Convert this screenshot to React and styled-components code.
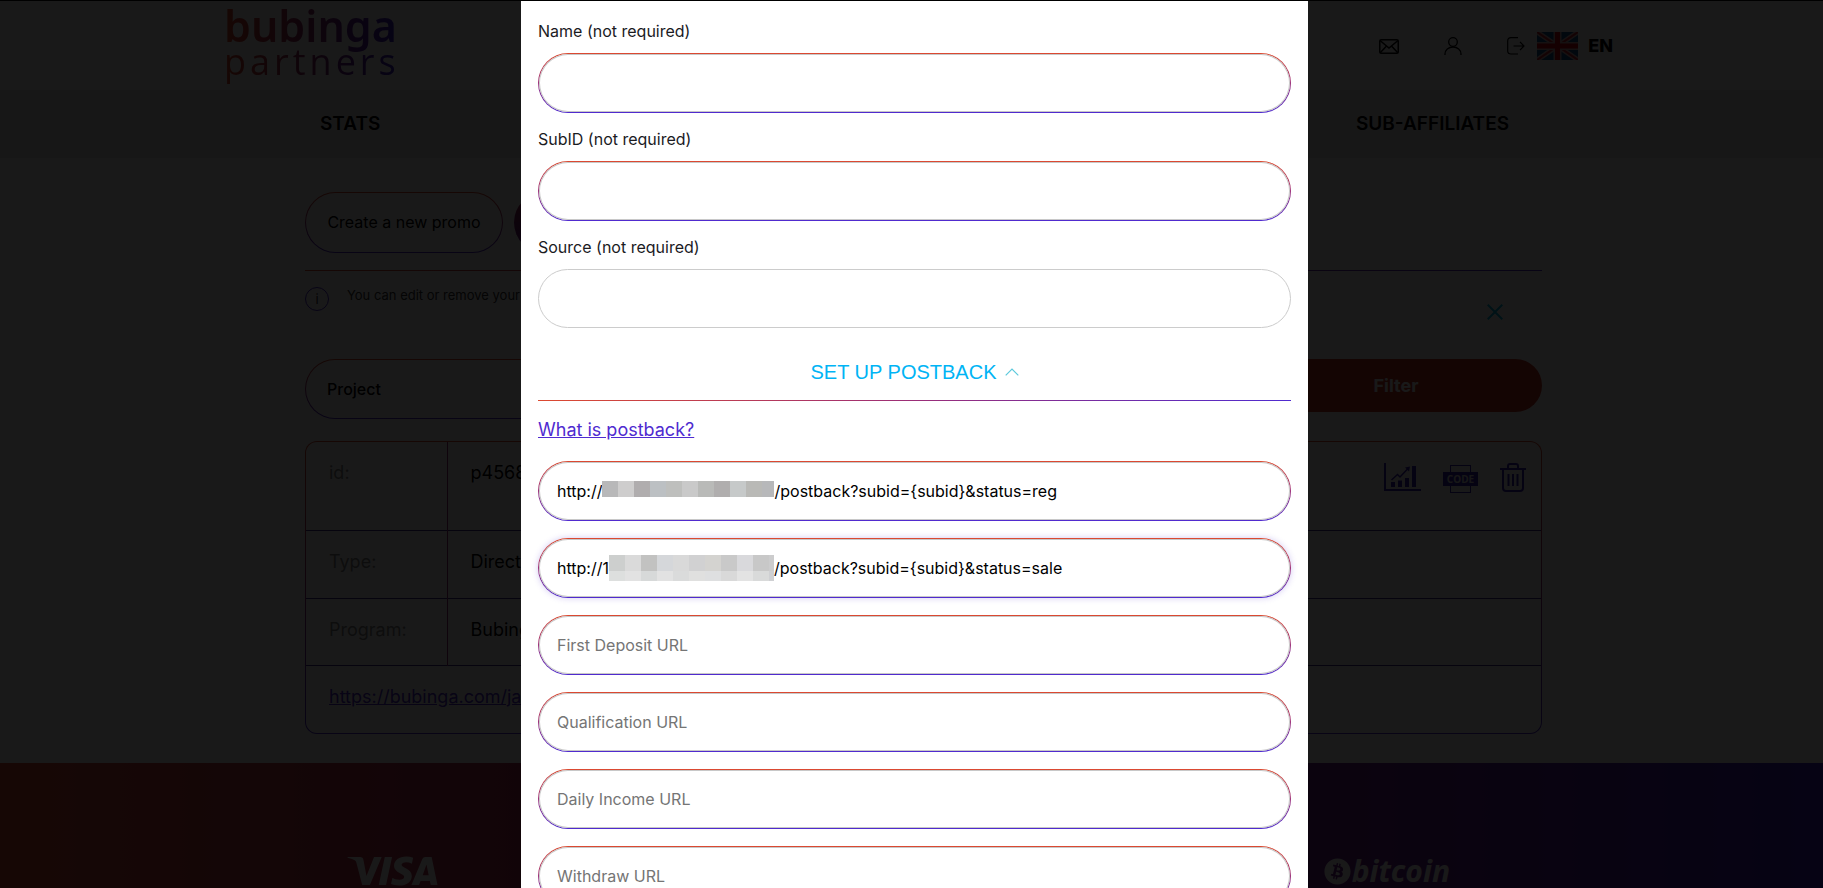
import React, { useState } from "react";
import styled, { createGlobalStyle } from "styled-components";
import { SiVisa } from "react-icons/si";
import { FaBitcoin } from "react-icons/fa";

const red = "#dc4a30";
const plum = "#9b2e78";
const violet = "#4f2bd0";

const GlobalStyle = createGlobalStyle`
  *, *::before, *::after { box-sizing: border-box; }
  body {
    margin: 0;
    overflow: hidden;
    background: #fff;
    color: #000;
    font: 400 16px/20px Inter, "Liberation Sans", sans-serif;
  }
  button, input, select { font: inherit; color: inherit; }
  button { cursor: pointer; }
`;

const Page = styled.div`
  display: flex;
  flex-direction: column;
  height: 100vh;
  overflow: hidden;
`;

const Header = styled.header`
  display: flex;
  justify-content: space-between;
  height: 90px;
  padding: 0 210px 0 224px;
`;

const Logo = styled.a`
  display: flex;
  flex-direction: column;
  color: transparent;
  background: linear-gradient(90deg, #e4472a, #8e2a6c 50%, #3a1fd0);
  background-clip: text;
  text-decoration: none;
`;

const LogoName = styled.span`
  font: 600 43px/52px "Noto Sans", sans-serif;
`;

const LogoTag = styled.span`
  font: 400 36px/20px "Open Sans", sans-serif;
  letter-spacing: 4px;
`;

const Tools = styled.div`
  display: flex;
  align-items: center;
  padding-top: 2px;
`;

const IconButton = styled.button`
  display: flex;
  padding: 0;
  border: 0;
  background: none;
  margin-right: ${(p) => p.$gap || 0}px;
`;

const Language = styled.button`
  display: flex;
  align-items: center;
  gap: 10px;
  padding: 0;
  border: 0;
  background: none;
  font-size: 18px;
  font-weight: 800;
`;

const Nav = styled.nav`
  display: flex;
  justify-content: space-between;
  align-items: center;
  height: 68px;
  padding: 0 314px 0 320px;
  background: #ececec;
`;

const NavLink = styled.a`
  color: #000;
  font-size: 19px;
  font-weight: 600;
  text-decoration: none;
`;

const Main = styled.main`
  width: calc(100% - 586px);
  margin-left: 305px;
  padding: 34px 0 29px;
`;

const outline = (fill = "#fff") => `
  border: 1px solid transparent;
  background:
    linear-gradient(${fill}, ${fill}) padding-box,
    linear-gradient(180deg, ${red}, ${plum} 50%, ${violet}) border-box;
`;

const PillRow = styled.div`
  display: flex;
  gap: 11px;
`;

const Pill = styled.button`
  height: 61px;
  min-width: 198px;
  padding: 0 21px 2px;
  border-radius: 31px;
  ${outline()}
`;

const PillFilled = styled(Pill)`
  border: 0;
  color: #fff;
  background: linear-gradient(180deg, #a3204a, #5a1c90);
`;

const Rule = styled.hr`
  height: 1px;
  margin: ${(p) => p.$top || 0}px 0 0;
  border: 0;
  background: linear-gradient(90deg, ${red}, ${plum} 50%, ${violet});
`;

const Notice = styled.div`
  display: flex;
  align-items: flex-start;
  height: 88px;
  padding: 16px 39px 0 0;
  color: #333;
  font-size: 13px;
`;

const Info = styled.span`
  width: 24px;
  height: 24px;
  margin-right: 18px;
  border: 1px solid ${violet};
  border-radius: 50%;
  text-align: center;
  line-height: 22px;
`;

const NoticeText = styled.p`
  flex: 1;
  margin: 0;
  line-height: 16px;
`;

const CloseNotice = styled(IconButton)`
  padding-top: 17px;
`;

const Filters = styled.form`
  display: flex;
  justify-content: space-between;
  align-items: flex-start;
`;

const Select = styled.select`
  width: 300px;
  height: 60px;
  padding: 0 21px;
  border-radius: 30px;
  appearance: none;
  font-weight: 500;
  ${outline()}
`;

const FilterButton = styled.button`
  width: 292px;
  height: 53px;
  border: 0;
  border-radius: 27px;
  color: #fff;
  background: #c93427;
  font-size: 18px;
  font-weight: 700;
`;

const Card = styled.section`
  margin-top: 22px;
  border-radius: 12px;
  ${outline()}
`;

const Table = styled.table`
  width: 100%;
  border-collapse: collapse;
  font-size: 18px;
  line-height: 24px;
`;

const Row = styled.tr`
  height: ${(p) => p.$height}px;
  & + & { border-top: 1px solid ${(p) => p.$line}; }
`;

const Term = styled.th`
  width: 141px;
  padding: 19px 23px;
  border-right: 1px solid ${plum};
  color: #888;
  font-weight: 400;
  text-align: left;
  vertical-align: top;
`;

const Value = styled.td`
  padding: 19px 15px 0 23px;
  vertical-align: top;
`;

const PromoLink = styled.a`
  color: ${violet};
`;

const ValueLine = styled.div`
  display: flex;
  justify-content: space-between;
`;

const Actions = styled.div`
  display: flex;
  align-items: flex-start;
  gap: 22px;
  padding-top: 2px;
  color: #3a22b8;
`;

const Footer = styled.footer`
  display: flex;
  flex: 1;
  justify-content: space-between;
  align-items: flex-end;
  padding: 0 373px 2px 347px;
  color: #fff;
  background: linear-gradient(90deg, #df4b38, #9e2664 40%, #8a1f78 62%, #3d1fc8);
`;

const Visa = styled(SiVisa)`
  width: 91px;
  height: 30px;
`;

const Bitcoin = styled.span`
  display: flex;
  align-items: center;
  gap: 1px;
  font: italic 700 30px/30px "Noto Sans", sans-serif;
`;

const Overlay = styled.div`
  position: fixed;
  inset: 0;
  display: flex;
  justify-content: center;
  align-items: flex-start;
  overflow: hidden;
  padding-left: 6px;
  border-top: 1px solid #000;
  background: rgba(0, 0, 0, 0.9);
`;

const Modal = styled.form`
  width: 787px;
  max-width: 100%;
  padding: 20px 17px;
  background: #fff;
`;

const Field = styled.div`
  display: flex;
  flex-direction: column;
  gap: 12px;
  margin-bottom: 16px;
`;

const Label = styled.label`
  color: #1b1b1f;
`;

const Box = styled.div`
  display: flex;
  align-items: center;
  height: 60px;
  padding: 0 18px;
  border-radius: 30px;
  ${outline()}
  box-shadow: inset 0 0 0 1px #c8c8c8${(p) => (p.$focused ? ", 0 0 6px rgba(79, 43, 208, 0.25)" : "")};
`;

const PlainBox = styled(Box)`
  height: 59px;
  border-color: #ccc;
  background: #fff;
  box-shadow: none;
`;

const Input = styled.input`
  flex: 1;
  min-width: 0;
  height: 40px;
  padding: 0;
  border: 0;
  outline: 0;
  background: transparent;
  &::placeholder { color: #757575; opacity: 1; }
`;

const Toggle = styled.button`
  display: flex;
  justify-content: center;
  align-items: center;
  gap: 8px;
  width: 100%;
  margin-top: 28px;
  padding: 0 0 12px;
  border: 0;
  background: none;
  color: #00b4f5;
  font: 400 20px/32px "Liberation Sans", sans-serif;
`;

const HelpLink = styled.a`
  display: inline-block;
  margin: 17px 0 19px;
  color: ${violet};
  font-size: 18px;
  line-height: 24px;
`;

const Urls = styled.div`
  display: flex;
  flex-direction: column;
  gap: 17px;
`;

const Mosaic = ({ width, height, rows }) => (
  <svg width={width} height={height} viewBox={`0 0 ${width} ${height}`} shapeRendering="crispEdges" aria-hidden="true">
    {rows.map((row) =>
      row.colors.map((c, i) => (
        <rect key={`${row.y}-${i}`} x={i * 16} y={row.y} width="16" height={row.height} fill={c} />
      ))
    )}
  </svg>
);

const regMosaic = [
  { y: 0, height: 16, colors: ["#b8b8b9", "#cecdcd", "#b0adae", "#bcc0c3", "#bebfbd", "#c9c9c9", "#b9bab8", "#b0aeae", "#c6c9c9", "#b9b9b6", "#b7b8ba"] },
];
const saleMosaic = [
  { y: 0, height: 16, colors: ["#cdcfce", "#dadada", "#c2c2c1", "#d5d7da", "#d9d9d9", "#d1d1d2", "#d4d3d0", "#c9c9c9", "#d9d9dc", "#c8c8c8", "#cccccd"] },
  { y: 16, height: 10, colors: ["#dddfde", "#e2e2e2", "#d7d9d9", "#e2e2e2", "#dadbdb", "#e0e0df", "#dedfe0", "#d9d9d9", "#e3e3e3", "#d9dada", "#cfd0d3"] },
];

const MailIcon = () => (
  <svg width="20" height="15" viewBox="0 0 20 15" fill="none" stroke="#000" strokeWidth="1.5">
    <rect x="0.75" y="0.75" width="18.5" height="13.5" rx="1.5" />
    <path d="M1 1.5l9 7.5 9-7.5M1 14l6.500-7M19 14l-6.500-7" />
  </svg>
);
const UserIcon = () => (
  <svg width="18" height="18" viewBox="0 0 18 18" fill="none" stroke="#000" strokeWidth="1.3">
    <circle cx="9" cy="5" r="4.300" />
    <path d="M1 18v-1c0-4 3.500-7 8-7s8 3 8 7v1" />
  </svg>
);
const LogoutIcon = () => (
  <svg width="18" height="18" viewBox="0 0 18 18" fill="none" stroke="#000" strokeWidth="1.2">
    <path d="M11 .7H4Q.7.7.7 4v10q0 3 3.300 3H11M6.500 9H17M13 4.800L17 9l-4 4.200" />
  </svg>
);
const FlagIcon = () => (
  <svg width="41" height="28" viewBox="0 0 41 28">
    <rect width="41" height="28" rx="1" fill="#10518f" />
    <path d="M0 0L41 28M41 0L0 28" stroke="#d8b0b0" strokeWidth="5" />
    <path d="M0 0L41 28M41 0L0 28" stroke="#c8202c" strokeWidth="2" />
    <path d="M20.500 0v28M0 14h41" stroke="#d8b0b0" strokeWidth="8" />
    <path d="M20.500 0v28M0 14h41" stroke="#d00012" strokeWidth="5" />
  </svg>
);
const CrossIcon = () => (
  <svg width="16" height="16" viewBox="0 0 16 16" stroke="#00b4e0" strokeWidth="2">
    <path d="M.7.7l14.600 14.600M15.300.7L.7 15.300" />
  </svg>
);
const ChartIcon = () => (
  <svg width="37" height="28" viewBox="0 0 37 28" fill="currentColor">
    <path d="M0 0h2v26h35v2H0zM7 19h4v5H7zM14 17.500h4V24h-4zM21 15h4v9h-4zM28 3h4v21h-4z" />
    <path d="M7.500 17l6-5.500 2.500 2.500 8-8.500" fill="none" stroke="currentColor" strokeWidth="1.500" />
    <path d="M21 4.500l5-1-1 5z" />
  </svg>
);
const CodeIcon = () => (
  <svg width="35" height="32" viewBox="0 -2 35 32">
    <rect x="7.500" y=".5" width="20" height="27" fill="none" stroke="currentColor" />
    <rect y="7" width="35" height="14" fill="currentColor" />
    <text x="17.500" y="18" textAnchor="middle" fill="#e8e8e8" fontFamily="Open Sans" fontSize="10" fontWeight="700">CODE</text>
  </svg>
);
const TrashIcon = () => (
  <svg width="26" height="29" viewBox="0 0 26 29" fill="none" stroke="currentColor" strokeWidth="2">
    <path d="M0 6h26M8 6V3q0-2 2-2h6q2 0 2 2v3M3 6v19q0 3 3 3h14q3 0 3-3V6M8.500 11v12M13 11v12M17.500 11v12" />
  </svg>
);
const ChevronUp = () => (
  <svg width="14" height="8" viewBox="0 0 14 8" fill="none" stroke="#5cc9dc" strokeWidth="1.2">
    <path d="M.7 7.300L7 1l6.300 6.300" />
  </svg>
);

const optionalFields = [
  { id: "name", label: "Name (not required)", Frame: Box },
  { id: "subid", label: "SubID (not required)", Frame: Box },
  { id: "source", label: "Source (not required)", Frame: PlainBox },
];

const emptyUrls = ["First Deposit URL", "Qualification URL", "Daily Income URL", "Withdraw URL"];

export default function App() {
  const [open, setOpen] = useState(true);
  return (
    <>
      <GlobalStyle />
      <Page>
        <Header>
          <Logo href="#">
            <LogoName>bubinga</LogoName>
            <LogoTag>partners</LogoTag>
          </Logo>
          <Tools>
            <IconButton $gap={45} aria-label="Messages"><MailIcon /></IconButton>
            <IconButton $gap={45} aria-label="Profile"><UserIcon /></IconButton>
            <IconButton $gap={12} aria-label="Log out"><LogoutIcon /></IconButton>
            <Language><FlagIcon />EN</Language>
          </Tools>
        </Header>
        <Nav>
          <NavLink href="#">STATS</NavLink>
          <NavLink href="#">SUB-AFFILIATES</NavLink>
        </Nav>
        <Main>
          <PillRow>
            <Pill>Create a new promo</Pill>
            <PillFilled aria-label="Promo list" />
          </PillRow>
          <Rule $top={17} />
          <Notice>
            <Info>i</Info>
            <NoticeText>You can edit or remove your promo</NoticeText>
            <CloseNotice aria-label="Close notice"><CrossIcon /></CloseNotice>
          </Notice>
          <Filters>
            <Select aria-label="Project"><option>Project</option></Select>
            <FilterButton type="button">Filter</FilterButton>
          </Filters>
          <Card>
            <Table>
              <tbody>
                <Row $height={88}>
                  <Term scope="row">id:</Term>
                  <Value>
                    <ValueLine>
                      p4568
                      <Actions><ChartIcon /><CodeIcon /><TrashIcon /></Actions>
                    </ValueLine>
                  </Value>
                </Row>
                <Row $height={68} $line="#5e2a52"><Term scope="row">Type:</Term><Value>Direct</Value></Row>
                <Row $height={67} $line="#4f2a62"><Term scope="row">Program:</Term><Value>Bubinga</Value></Row>
                <Row $height={68} $line="#3f2a90">
                  <Value colSpan={2}><PromoLink href="#">https://bubinga.com/ja</PromoLink></Value>
                </Row>
              </tbody>
            </Table>
          </Card>
        </Main>
        <Footer>
          <Visa viewBox="0 8 24 8" />
          <Bitcoin><FaBitcoin size={27} />bitcoin</Bitcoin>
        </Footer>
      </Page>
      <Overlay>
        <Modal>
          {optionalFields.map(({ id, label, Frame }) => (
            <Field key={id}>
              <Label htmlFor={id}>{label}</Label>
              <Frame><Input id={id} /></Frame>
            </Field>
          ))}
          <Toggle type="button" aria-expanded={open} onClick={() => setOpen(!open)}>
            SET UP POSTBACK <ChevronUp />
          </Toggle>
          <Rule />
          {open && (
            <>
              <HelpLink href="#">What is postback?</HelpLink>
              <Urls>
                <Box>
                  <span>http://</span>
                  <Mosaic width={172} height={20} rows={regMosaic} />
                  <Input aria-label="Registration URL" defaultValue="/postback?subid={subid}&status=reg" />
                </Box>
                <Box $focused>
                  <span>http://1</span>
                  <Mosaic width={165} height={26} rows={saleMosaic} />
                  <Input aria-label="Sale URL" defaultValue="/postback?subid={subid}&status=sale" />
                </Box>
                {emptyUrls.map((name) => (
                  <Box key={name}><Input aria-label={name} placeholder={name} /></Box>
                ))}
              </Urls>
            </>
          )}
        </Modal>
      </Overlay>
    </>
  );
}
